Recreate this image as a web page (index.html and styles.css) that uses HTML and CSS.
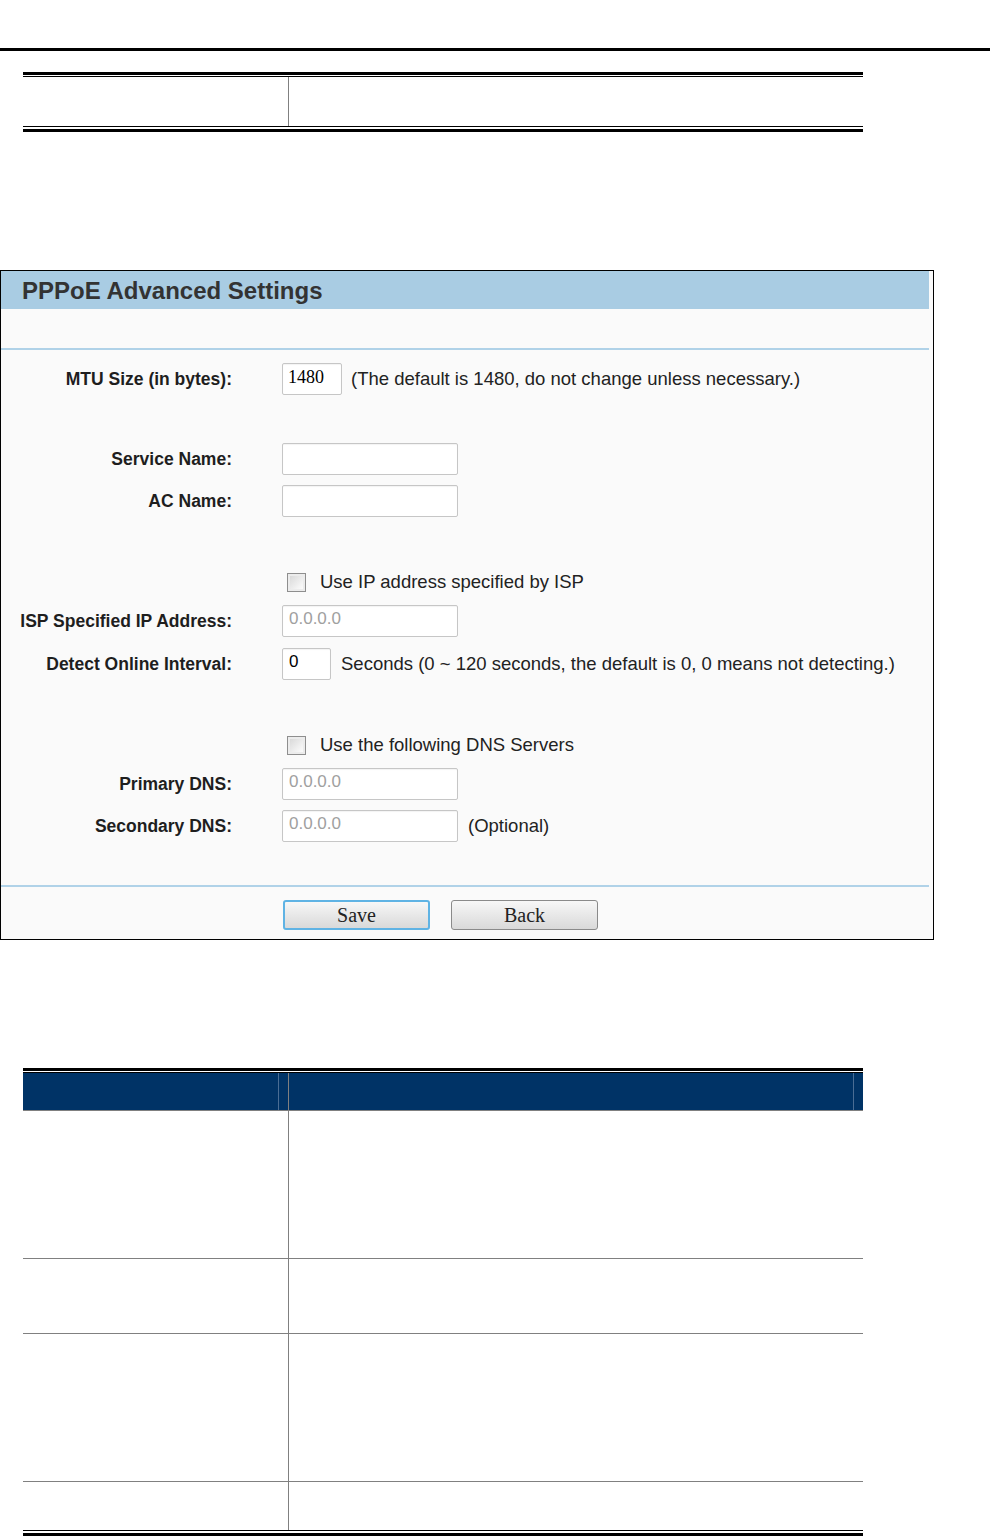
FILE: index.html
```html
<!DOCTYPE html>
<html lang="en">
<head>
    <meta charset="UTF-8">
    <meta name="viewport" content="width=device-width, initial-scale=1.0">
    <title>PPPoE Advanced Settings</title>
    <link rel="stylesheet" href="styles.css">
</head>
<body>
    <div class="page-rule"></div>

    <!-- tabela do topo (continuacao da pagina anterior) -->
    <div class="doc-table top-table">
        <div class="doc-grid">
            <div class="cell row-short"></div>
            <div class="cell row-short"></div>
        </div>
    </div>

    <!-- painel do roteador -->
    <div class="panel">
        <div class="panel-inner">
            <div class="panel-title">PPPoE Advanced Settings</div>
            <div class="panel-spacer"></div>
            <div class="blue-line"></div>

            <div class="form">
                <div class="form-row first">
                    <label class="label">MTU Size (in bytes):</label>
                    <div class="input small mono">1480</div>
                    <span class="hint">(The default is 1480, do not change unless necessary.)</span>
                </div>

                <div class="form-row section">
                    <label class="label">Service Name:</label>
                    <div class="input"></div>
                </div>
                <div class="form-row">
                    <label class="label">AC Name:</label>
                    <div class="input"></div>
                </div>

                <div class="form-row section check-row">
                    <span class="label"></span>
                    <span class="checkbox"></span>
                    <span class="check-text">Use IP address specified by ISP</span>
                </div>
                <div class="form-row">
                    <label class="label">ISP Specified IP Address:</label>
                    <div class="input placeholder">0.0.0.0</div>
                </div>
                <div class="form-row detect-row">
                    <label class="label">Detect Online Interval:</label>
                    <div class="input tiny">0</div>
                    <span class="hint">Seconds (0 ~ 120 seconds, the default is 0, 0 means not detecting.)</span>
                </div>

                <div class="form-row section check-row">
                    <span class="label"></span>
                    <span class="checkbox"></span>
                    <span class="check-text">Use the following DNS Servers</span>
                </div>
                <div class="form-row">
                    <label class="label">Primary DNS:</label>
                    <div class="input placeholder">0.0.0.0</div>
                </div>
                <div class="form-row">
                    <label class="label">Secondary DNS:</label>
                    <div class="input placeholder">0.0.0.0</div>
                    <span class="hint">(Optional)</span>
                </div>
            </div>

            <div class="blue-line bottom"></div>

            <div class="buttons">
                <button class="btn focused">Save</button>
                <button class="btn">Back</button>
            </div>
        </div>
    </div>

    <!-- tabela de descricao -->
    <div class="doc-table bottom-table">
        <div class="doc-grid">
            <div class="cell head"><div class="head-inner"></div></div>
            <div class="cell head"><div class="head-inner"></div></div>

            <div class="cell row-tall"></div>
            <div class="cell row-tall"></div>

            <div class="cell row-mid"></div>
            <div class="cell row-mid"></div>

            <div class="cell row-tall"></div>
            <div class="cell row-tall"></div>

            <div class="cell row-end"></div>
            <div class="cell row-end"></div>
        </div>
    </div>
</body>
</html>
```

FILE: styles.css
```css
body {
    margin: 0;
    background: #fff;
    font-family: "Liberation Sans", Arial, sans-serif;
    color: #222;
}

.page-rule {
    height: 3px;
    margin-top: 48px;
    background: #000;
}

/* tabelas do manual */
.doc-table {
    width: 840px;
    margin-left: 23px;
    border-top: 3px solid #000;
    border-bottom: 3px solid #000;
    padding: 1px 0 2px 0;
}

.top-table {
    margin-top: 21px;
}

.bottom-table {
    margin-top: 128px;
}

.doc-grid {
    display: grid;
    grid-template-columns: 265px 574px;
    gap: 1px;
    background: #808080; /* aparece nas linhas divisórias */
    border-top: 1px solid #000;
    border-bottom: 1px solid #000;
}

.cell { background: #fff; }
.row-short { height: 49px; }
.row-tall { height: 147px; }
.row-mid { height: 74px; }
.row-end { height: 48px; }

.cell.head {
    height: 37px;
    background: #003366;
    padding-right: 9px;
}

.head-inner {
    height: 100%;
    border-right: 1px solid #4a6d94;
}

/* painel PPPoE */
.panel {
    margin-top: 138px;
    width: 932px;
    border: 1px solid #000;
    background: #fafafa;
}

.panel-inner {
    width: 928px;
}

.panel-title {
    height: 38px;
    line-height: 39px;
    padding-left: 21px;
    background: #a9cce3;
    color: #333;
    font-size: 24px;
    font-weight: bold;
}

.panel-spacer {
    height: 39px;
}

.blue-line {
    height: 2px;
    background: #b0d2e8;
}

.form {
    padding-bottom: 43px;
}

.form-row {
    display: flex;
    align-items: center;
    height: 32px;
    margin-top: 10px;
}

.form-row.first { margin-top: 13px; }
.form-row.section { margin-top: 48px; }
.form-row.section.check-row { margin-top: 49px; }
.check-row + .form-row { margin-top: 7px; }
.form-row.detect-row { margin-top: 11px; }

.label {
    width: 231px;
    margin-right: 50px;
    flex-shrink: 0;
    text-align: right;
    font-size: 17.5px;
    font-weight: bold;
    color: #1e1e1e;
}

.input {
    box-sizing: border-box;
    width: 176px;
    height: 32px;
    padding: 0 0 4px 6px;
    border: 1px solid #c6c6c6;
    border-radius: 2px;
    background: #fff;
    box-shadow: inset 0 1px 1px rgba(0, 0, 0, 0.05);
    display: flex;
    align-items: center;
    font-size: 17px;
    color: #000;
}

.input.small { width: 60px; }
.input.tiny { width: 49px; }
.input.mono { font-family: "Liberation Serif", serif; font-size: 18px; padding-left: 5px; }
.input.placeholder { color: #a0a0a0; }

.hint {
    margin-left: 9px;
    font-size: 18.5px;
    color: #222;
    white-space: nowrap;
}

.input.tiny + .hint,
.input.placeholder + .hint { margin-left: 10px; }

.checkbox {
    box-sizing: border-box;
    width: 19px;
    height: 19px;
    margin-left: 5px;
    border: 1px solid #8e8e8e;
    background: linear-gradient(135deg, #d4d4d4, #f4f4f4 70%, #ffffff);
    box-shadow: inset 0 0 0 2px #ececec;
}

.check-text {
    margin-left: 14px;
    font-size: 18.5px;
    color: #222;
}

.buttons {
    display: flex;
    gap: 21px;
    padding: 13px 0 9px 282px;
}

.btn {
    box-sizing: border-box;
    width: 147px;
    height: 30px;
    padding: 0;
    border: 1px solid #8a8a8a;
    border-radius: 3px;
    background: linear-gradient(#f7f7f7, #e8e8e8 50%, #d9d9d9);
    font-family: "Liberation Serif", serif;
    font-size: 20px;
    color: #222;
}

.btn.focused {
    border: 2px solid #5fb3e4;
}
```
